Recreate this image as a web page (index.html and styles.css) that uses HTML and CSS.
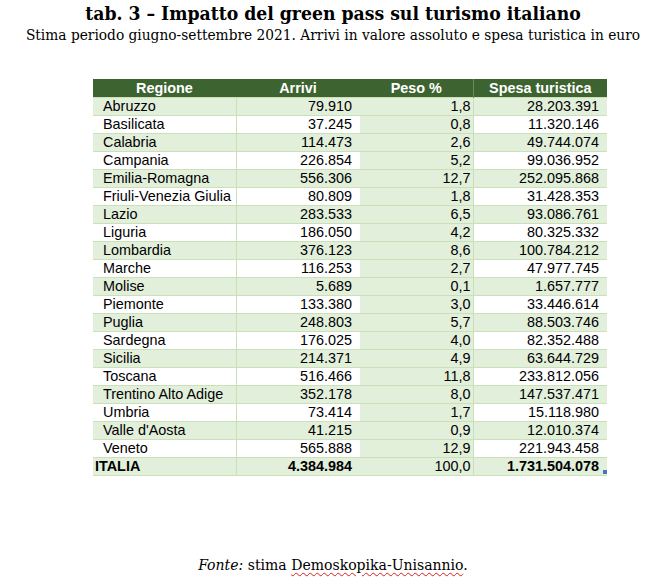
FILE: index.html
```html
<!DOCTYPE html>
<html lang="it">
<head>
<meta charset="utf-8">
<title>tab. 3</title>
<link rel="stylesheet" href="styles.css">
</head>
<body>
<div class="page">
  <h1 class="title">tab. 3 – Impatto del green pass sul turismo italiano</h1>
  <p class="subtitle">Stima periodo giugno-settembre 2021. Arrivi in valore assoluto e spesa turistica in euro</p>
  <div class="table-wrap">
    <table class="data">
      <colgroup><col class="c1"><col class="c2"><col class="c3"><col class="c4"></colgroup>
      <thead>
        <tr><th>Regione</th><th>Arrivi</th><th>Peso %</th><th>Spesa turistica</th></tr>
      </thead>
      <tbody>
        <tr><td>Abruzzo</td><td>79.910</td><td>1,8</td><td>28.203.391</td></tr>
        <tr><td>Basilicata</td><td>37.245</td><td>0,8</td><td>11.320.146</td></tr>
        <tr><td>Calabria</td><td>114.473</td><td>2,6</td><td>49.744.074</td></tr>
        <tr><td>Campania</td><td>226.854</td><td>5,2</td><td>99.036.952</td></tr>
        <tr><td>Emilia-Romagna</td><td>556.306</td><td>12,7</td><td>252.095.868</td></tr>
        <tr><td>Friuli-Venezia Giulia</td><td>80.809</td><td>1,8</td><td>31.428.353</td></tr>
        <tr><td>Lazio</td><td>283.533</td><td>6,5</td><td>93.086.761</td></tr>
        <tr><td>Liguria</td><td>186.050</td><td>4,2</td><td>80.325.332</td></tr>
        <tr><td>Lombardia</td><td>376.123</td><td>8,6</td><td>100.784.212</td></tr>
        <tr><td>Marche</td><td>116.253</td><td>2,7</td><td>47.977.745</td></tr>
        <tr><td>Molise</td><td>5.689</td><td>0,1</td><td>1.657.777</td></tr>
        <tr><td>Piemonte</td><td>133.380</td><td>3,0</td><td>33.446.614</td></tr>
        <tr><td>Puglia</td><td>248.803</td><td>5,7</td><td>88.503.746</td></tr>
        <tr><td>Sardegna</td><td>176.025</td><td>4,0</td><td>82.352.488</td></tr>
        <tr><td>Sicilia</td><td>214.371</td><td>4,9</td><td>63.644.729</td></tr>
        <tr><td>Toscana</td><td>516.466</td><td>11,8</td><td>233.812.056</td></tr>
        <tr><td>Trentino Alto Adige</td><td>352.178</td><td>8,0</td><td>147.537.471</td></tr>
        <tr><td>Umbria</td><td>73.414</td><td>1,7</td><td>15.118.980</td></tr>
        <tr><td>Valle d'Aosta</td><td>41.215</td><td>0,9</td><td>12.010.374</td></tr>
        <tr><td>Veneto</td><td>565.888</td><td>12,9</td><td>221.943.458</td></tr>
      </tbody>
      <tfoot>
        <tr><td>ITALIA</td><td>4.384.984</td><td>100,0</td><td>1.731.504.078</td></tr>
      </tfoot>
    </table>
    <span class="handle"></span>
  </div>
  <p class="source"><em>Fonte:</em> stima <span class="spell">Demoskopika-Unisannio</span>.</p>
</div>
</body>
</html>
```
FILE: styles.css
```css
html, body {
  margin: 0;
  padding: 0;
  background: #ffffff;
}
.page {
  width: 666px;
  height: 580px;
  padding-top: 1px;
  box-sizing: border-box;
  color: #000;
}
.title {
  margin: 0;
  text-align: center;
  font-family: "DejaVu Serif Condensed", "Liberation Serif", serif;
  font-weight: bold;
  font-size: 19.2px;
  line-height: 26px;
}
.subtitle {
  margin: 0;
  text-align: center;
  font-family: "DejaVu Serif Condensed", "Liberation Serif", serif;
  font-size: 15.3px;
  line-height: 17px;
}
.table-wrap {
  position: relative;
  width: 514px;
  margin: 35px 0 0 93px;
}
.data {
  border-collapse: collapse;
  table-layout: fixed;
  width: 514px;
  font-family: "Liberation Sans", Arial, sans-serif;
  font-size: 14.4px;
}
.c1 { width: 143px; }
.c2 { width: 124px; }
.c3 { width: 113px; }
.c4 { width: 134px; }
.data th {
  background: #3d6430;
  color: #ffffff;
  font-weight: bold;
  height: 18px;
  line-height: 18px;
  padding: 0;
  text-align: center;
}
.data th:nth-child(3) { border-right: 1px solid #6a8d5c; }
.data td {
  height: 17px;
  line-height: 17px;
  padding: 0;
  border-top: 1px solid #c9e0b9;
  background: #e2efda;
  white-space: nowrap;
  overflow: hidden;
}
.data td:nth-child(1) {
  padding-left: 10px;
  border-right: 1px solid #c9e0b9;
}
.data td:nth-child(2) {
  text-align: right;
  padding-right: 8px;
}
.data td:nth-child(3) {
  text-align: right;
  padding-right: 2px;
  border-right: 1px solid #c9e0b9;
}
.data td:nth-child(4) {
  text-align: right;
  padding-right: 8px;
}
.data tbody tr:nth-child(even) td:nth-child(1),
.data tbody tr:nth-child(even) td:nth-child(2),
.data tbody tr:nth-child(even) td:nth-child(4) {
  background: #ffffff;
}
.data tfoot td {
  font-weight: bold;
  border-bottom: 1px solid #c9e0b9;
}
.data tfoot td:nth-child(1) { padding-left: 2px; }
.data tfoot td:nth-child(3) { font-weight: normal; }
.handle {
  position: absolute;
  right: 0;
  bottom: 2px;
  width: 4px;
  height: 4px;
  background: #4a72c4;
}
.source {
  margin: 80px 0 0 0;
  text-align: center;
  font-family: "DejaVu Serif Condensed", "Liberation Serif", serif;
  font-size: 15.6px;
  line-height: 18px;
}
.spell {
  text-decoration: underline wavy #d82020;
  text-decoration-thickness: 1px;
  text-underline-offset: 2px;
}
```
